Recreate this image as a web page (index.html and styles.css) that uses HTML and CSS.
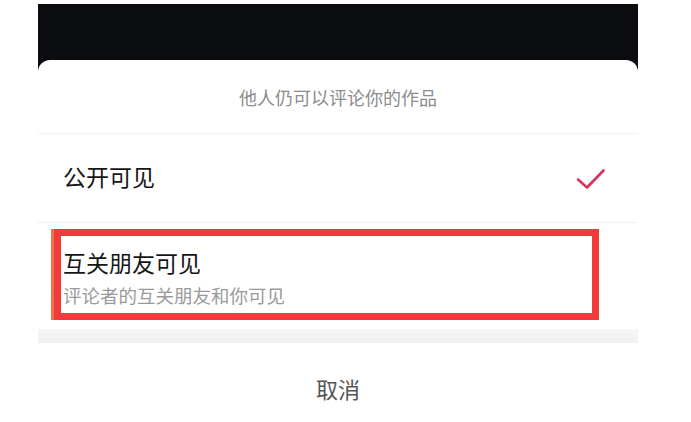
FILE: index.html
```html
<!DOCTYPE html>
<html lang="zh-CN">
<head>
<meta charset="utf-8">
<title>评论可见范围</title>
<link rel="stylesheet" href="styles.css">
</head>
<body>
<div class="frame">
  <div class="sheet">
    <div class="sheet-title">他人仍可以评论你的作品</div>
    <div class="option">
      <div class="option-text option-text-single">
        <div class="option-name">公开可见</div>
      </div>
      <svg class="check" width="30" height="22" viewBox="0 0 30 22" aria-hidden="true">
        <path d="M2 11.5 L11 19.5 L27.5 2.5" fill="none" stroke="#dd2f5c" stroke-width="2.6" stroke-linecap="round" stroke-linejoin="round"/>
      </svg>
    </div>
    <div class="option option-friends">
      <div class="option-text">
        <div class="option-name">互关朋友可见</div>
        <div class="option-desc">评论者的互关朋友和你可见</div>
      </div>
      <div class="highlight"></div>
    </div>
    <div class="gap"></div>
    <div class="cancel">取消</div>
  </div>
</div>
</body>
</html>
```

FILE: styles.css
```css
html, body {
  margin: 0;
  padding: 0;
  background: #ffffff;
}

body {
  font-family: "Noto Sans CJK SC", "Noto Sans", sans-serif;
  height: 422px;
  overflow: hidden;
}

.frame {
  margin: 4px 0 0 38px;
  width: 600px;
  padding-top: 56px;
  background: #0b0c0f;
}

.sheet {
  background: #ffffff;
  border-radius: 12px 12px 0 0;
  display: flex;
  flex-direction: column;
}

.sheet-title {
  height: 73px;
  display: flex;
  align-items: center;
  justify-content: center;
  font-size: 18px;
  color: #8c8c8c;
  border-bottom: 1px solid #efefef;
}

.option {
  position: relative;
  display: flex;
  align-items: center;
  justify-content: space-between;
  padding: 0 32px 0 25px;
  height: 88px;
  border-bottom: 1px solid #efefef;
}

.option-text-single {
  padding-bottom: 5px;
}

.option-name {
  font-size: 23px;
  line-height: 30px;
  color: #161616;
}

.check {
  display: block;
  margin-top: 2px;
}

.option-friends {
  height: 106px;
  border-bottom: none;
  align-items: flex-start;
}

.option-friends .option-text {
  padding-top: 24px;
}

.option-desc {
  font-size: 18.5px;
  line-height: 30px;
  color: #9a9a9a;
  margin-top: 3px;
}

.highlight {
  position: absolute;
  left: 16px;
  top: 6px;
  width: 531px;
  height: 77px;
  border: 7px solid #f23a3c;
  box-shadow: -3px 0 0 #ec7448;
}

.gap {
  height: 14px;
  background: linear-gradient(#f6f6f6, #f0f0f0);
}

.cancel {
  height: 90px;
  display: flex;
  align-items: center;
  justify-content: center;
  font-size: 22px;
  color: #555555;
}
```
